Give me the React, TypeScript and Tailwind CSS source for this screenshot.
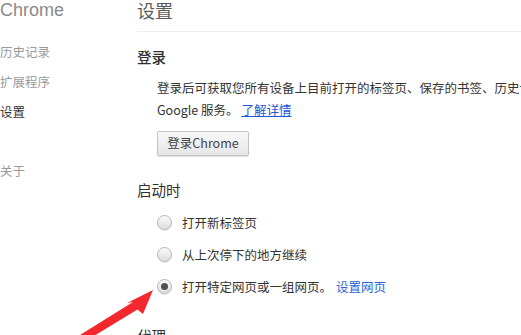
import React from "react";

const CJK = "font-['Noto_Sans_CJK_SC','Noto_Sans',sans-serif]";

const NAV_ITEMS: { label: string; active?: boolean; gapBefore?: boolean }[] = [
  { label: "历史记录" },
  { label: "扩展程序" },
  { label: "设置", active: true },
  { label: "关于", gapBefore: true },
];

const STARTUP_OPTIONS: { label: string; checked?: boolean; link?: string }[] = [
  { label: "打开新标签页" },
  { label: "从上次停下的地方继续" },
  { label: "打开特定网页或一组网页。", checked: true, link: "设置网页" },
];

export default function App() {
  return (
    <div className={`relative flex w-[521px] h-[335px] overflow-hidden bg-white ${CJK}`}>
      <Sidebar />
      <main className="flex-1 min-w-0 overflow-hidden">
        <h1 className="text-[18px] leading-[20px] text-[#5c5c5c]">设置</h1>
        <div className="mt-[11px] border-t border-[#eeeeee]" />

        <h3 className="mt-[15px] text-[14.5px] leading-[20px] font-medium text-[#303030]">登录</h3>
        <div className="mt-[10px] pl-[20px] text-[12.5px] leading-[22px] text-[#333]">
          <p className="whitespace-nowrap">
            登录后可获取您所有设备上目前打开的标签页、保存的书签、历史记录及其他设置，还会自动登录
          </p>
          <p className="whitespace-nowrap">
            Google 服务。{" "}
            <a href="#" className="text-[#1a56d6] underline">
              了解详情
            </a>
          </p>
        </div>
        <div className="mt-[8px] pl-[20px]">
          <SignInButton />
        </div>

        <h3 className="mt-[24px] text-[14.5px] leading-[20px] text-[#303030]">启动时</h3>
        <div className="mt-[7px] pl-[20px]">
          {STARTUP_OPTIONS.map((opt) => (
            <RadioRow key={opt.label} {...opt} />
          ))}
        </div>

        <h3 className="mt-[23px] text-[14.5px] leading-[20px] text-[#303030]">代理</h3>
      </main>
      <Arrow />
    </div>
  );
}

const Sidebar = () => {
  return (
    <nav className="w-[137px] shrink-0">
      <div className="font-['Liberation_Sans',sans-serif] text-[18px] leading-[20px] text-[#8a8a8a]">
        Chrome
      </div>
      <ul className="mt-[17px] text-[12.5px]">
        {NAV_ITEMS.map((item) => (
          <li
            key={item.label}
            className={`h-[30px] leading-[30px] ${item.gapBefore ? "mt-[29px]" : ""} ${
              item.active ? "text-[#333]" : "text-[#9a9a9a]"
            }`}
          >
            {item.label}
          </li>
        ))}
      </ul>
    </nav>
  );
};

const SignInButton = () => {
  return (
    <button className="w-[92px] h-[25px] rounded-[2px] border border-[#c4c4c4] bg-gradient-to-b from-[#f8f8f8] to-[#e6e6e6] text-[12.5px] text-[#444] shadow-[0_1px_1px_rgba(0,0,0,0.12)]">
      登录Chrome
    </button>
  );
};

type RadioRowProps = { label: string; checked?: boolean; link?: string };

const RadioRow = ({ label, checked, link }: RadioRowProps) => {
  return (
    <div className="flex items-center h-[32px] text-[12.5px] text-[#333]">
      <span className="flex items-center justify-center w-[15px] h-[15px] rounded-full border border-[#b5b5b5] bg-gradient-to-b from-[#fafafa] to-[#dedede] shadow-[0_1px_1px_rgba(0,0,0,0.1)]">
        {checked && <span className="w-[7px] h-[7px] rounded-full bg-[#505050]" />}
      </span>
      <span className="ml-[10px] whitespace-nowrap">{label}</span>
      {link && (
        <a href="#" className="ml-[4px] text-[#2a62d6]">
          {link}
        </a>
      )}
    </div>
  );
};

// red annotation arrow drawn over the page
const Arrow = () => {
  return (
    <svg
      className="absolute left-0 top-0 pointer-events-none"
      width={521}
      height={335}
      viewBox="0 0 521 335"
    >
      <polygon
        points="153,290 143,314 137.5,309.5 84,342 80,335 133,302 127,303"
        fill="#f2282c"
      />
    </svg>
  );
};
